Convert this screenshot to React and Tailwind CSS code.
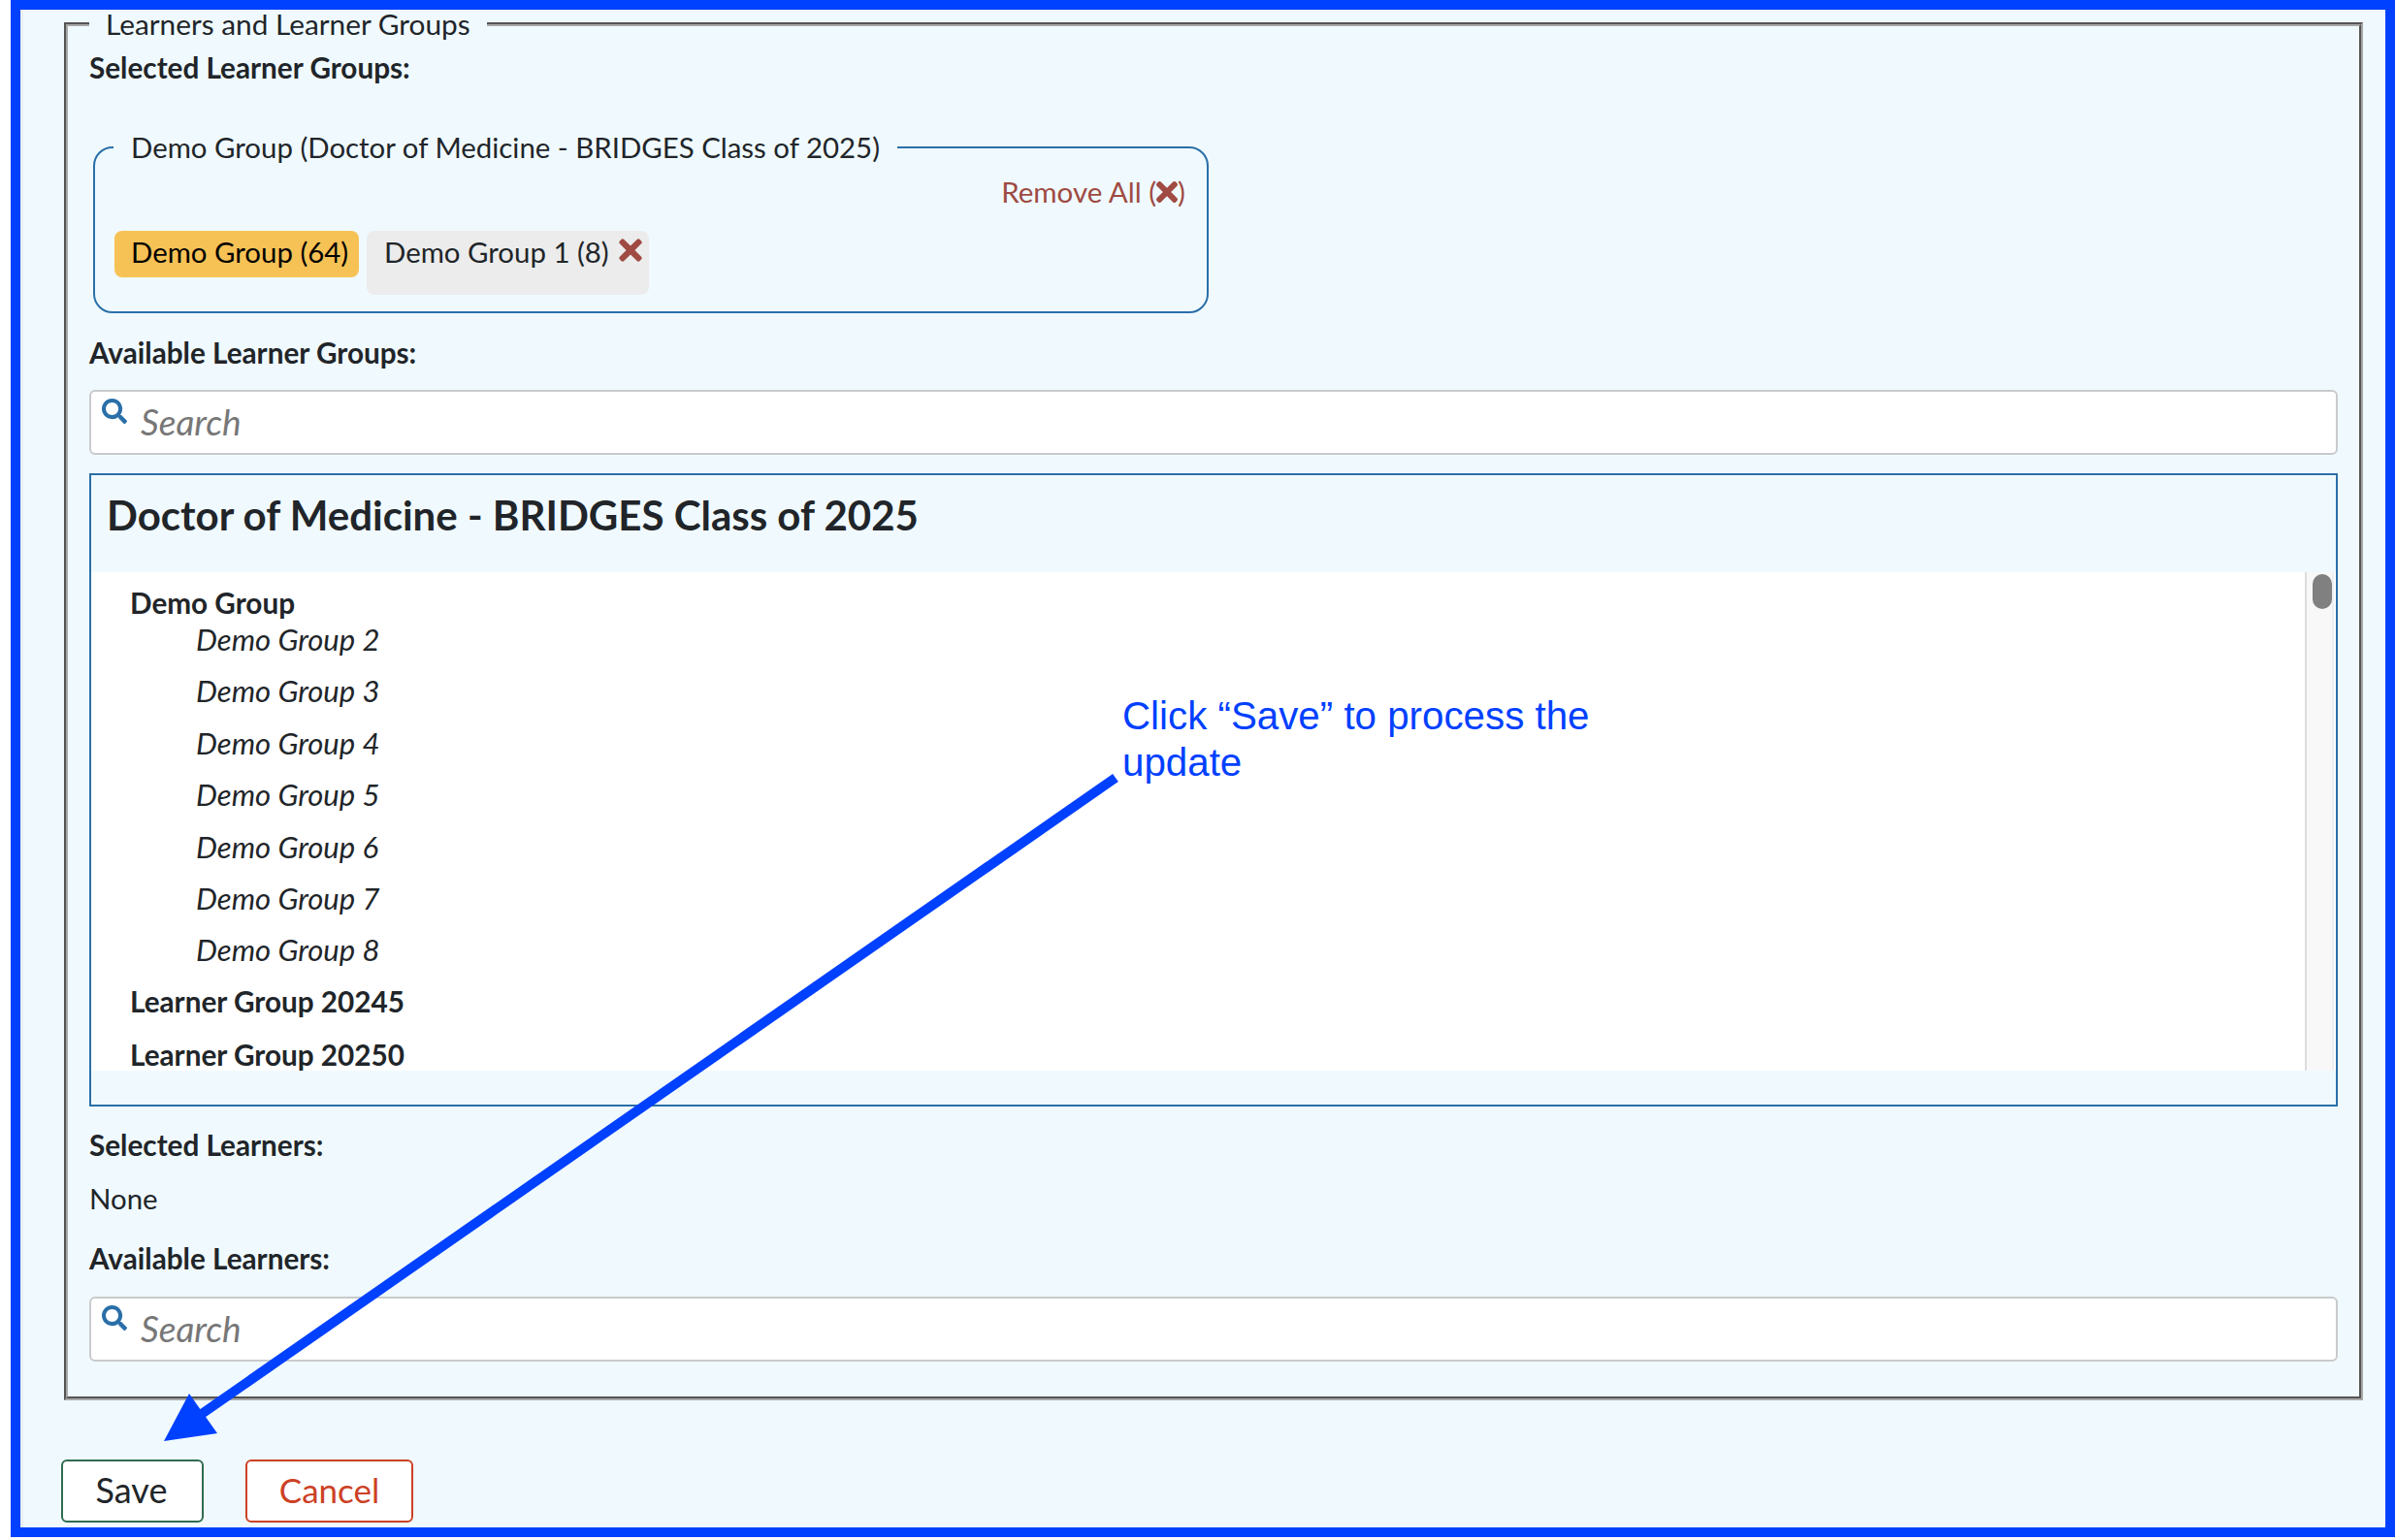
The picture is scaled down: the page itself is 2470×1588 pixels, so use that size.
import { FaSearch, FaTimes } from "react-icons/fa";

const groups = ["Demo Group 2", "Demo Group 3", "Demo Group 4", "Demo Group 5", "Demo Group 6", "Demo Group 7", "Demo Group 8"];

function SearchBox({ className }) {
  return (
    <div className={`h-[67px] w-[2318px] bg-white border-2 border-[#c8cacb] rounded-[6px] flex items-start pl-[10px] ${className}`}>
      <FaSearch className="w-[28px] h-[26px] mt-[7px] text-[#2a6fa8] shrink-0" />
      <span className="ml-[13px] mt-[12px] text-[37px] leading-[38px] italic text-[#777777]">Search</span>
    </div>
  );
}

function Label({ children, className }) {
  return <div className={`font-bold text-[29.7px] leading-[38px] text-[#212529] ${className}`}>{children}</div>;
}

export default function App() {
  return (
    <div className="relative w-[2470px] h-[1588px] bg-white overflow-hidden font-['Lato','Liberation_Sans',sans-serif] text-[#212529]">
      <div className="ml-[11px] w-[2458px] h-[1585px] border-[10px] border-[#0040ff] bg-[#f0fafe] shadow-[inset_3px_0_0_#e9eff1]">
        <fieldset className="ml-[45px] w-[2368px] border-[4px] [border-style:groove] border-[#a8a8a8] px-[22px] pb-[36px]">
          <legend className="px-[17px] text-[29.8px] leading-[30px]">Learners and Learner Groups</legend>
          <Label className="mt-[11px]">Selected Learner Groups:</Label>

          <fieldset className="mt-[44px] ml-[4px] w-[1150px] border-2 border-[#2a6fa8] rounded-[20px]">
            <legend className="ml-[19px] px-[18px] text-[29.4px] leading-[38px]">Demo Group (Doctor of Medicine - BRIDGES Class of 2025)</legend>
            <div className="mt-[8px] pr-[22px] flex justify-end items-center text-[29.5px] leading-[38px] text-[#9f4a42]">
              Remove All (<FaTimes className="w-[22px] h-[32px]" />)
            </div>
            <div className="mt-[21px] pl-[20px] pb-[17px] flex items-start gap-[8px]">
              <div className="h-[48px] w-[252px] pl-[17px] bg-[#f7c255] rounded-[8px] text-[29.4px] leading-[44px] text-black">Demo Group (64)</div>
              <div className="h-[66px] w-[291px] pl-[18px] pr-[7px] bg-[#ececec] rounded-[8px] flex items-start justify-between text-[29.4px] leading-[44px]">
                <span>Demo Group 1 (8)</span>
                <FaTimes className="w-[24px] h-[34px] mt-[3px] text-[#9f4a42]" />
              </div>
            </div>
          </fieldset>

          <Label className="mt-[22px]">Available Learner Groups:</Label>
          <SearchBox className="mt-[19px]" />

          <div className="mt-[19px] w-[2318px] h-[653px] border-2 border-[#2a6fa8]">
            <div className="h-[100px] pl-[16px] pt-[17px] text-[42px] leading-[48px] font-bold">Doctor of Medicine - BRIDGES Class of 2025</div>
            <div className="h-[514px] bg-white flex">
              <div className="flex-1 pt-[13px] pl-[40px] overflow-hidden">
                <Label>Demo Group</Label>
                <div className="-mt-[1px]">
                  {groups.map((g) => (
                    <div key={g} className="ml-[68px] mb-[15.4px] italic text-[31px] leading-[38px]">{g}</div>
                  ))}
                </div>
                <Label>Learner Group 20245</Label>
                <Label className="mt-[17px]">Learner Group 20250</Label>
              </div>
              <div className="w-[30px] mr-[2px] pt-[2px] bg-[#f8f8f8] border-l-2 border-r-2 border-l-[#dddddd] border-r-[#eeeeee] pl-[6px]">
                <div className="w-[20px] h-[36px] bg-[#808080] rounded-full" />
              </div>
            </div>
          </div>

          <Label className="mt-[21px]">Selected Learners:</Label>
          <div className="mt-[17px] text-[29.4px] leading-[38px]">None</div>
          <Label className="mt-[24px]">Available Learners:</Label>
          <SearchBox className="mt-[20px]" />
        </fieldset>

        <div className="mt-[61px] ml-[42px] flex gap-[43px]">
          <button className="w-[147px] h-[65px] pb-[3px] pr-[2px] bg-white border-2 border-[#2f6b50] rounded-[6px] text-[36px] leading-[40px] text-[#212529]">Save</button>
          <button className="w-[173px] h-[65px] pb-[3px] bg-white border-2 border-[#cc4125] rounded-[6px] text-[35px] leading-[40px] text-[#cc4125]">Cancel</button>
        </div>
      </div>

      <div className="absolute left-[1157px] top-[715px] w-[545px] font-['Liberation_Sans',sans-serif] text-[40.3px] leading-[48px] text-[#0040ff]">
        Click “Save” to process the update
      </div>
      <svg className="absolute left-0 top-0 pointer-events-none" width="2470" height="1588">
        <line x1="1150" y1="802" x2="205" y2="1460" stroke="#0040ff" strokeWidth="10" />
        <polygon points="169,1486 195,1437 224,1478" fill="#0040ff" />
      </svg>
    </div>
  );
}
